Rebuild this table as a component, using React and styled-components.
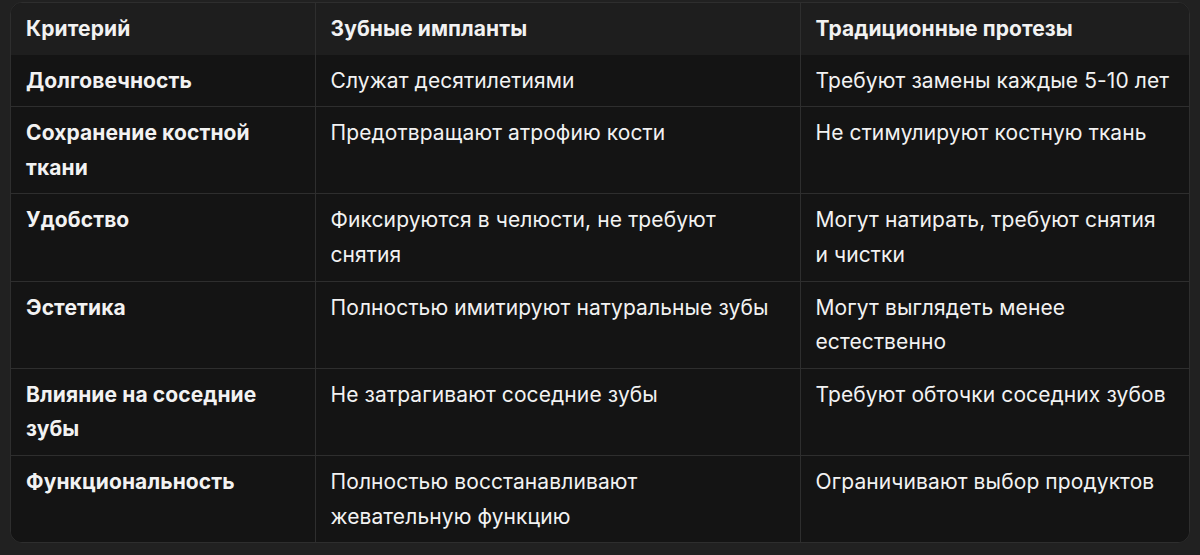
import React from "react";
import styled, { createGlobalStyle } from "styled-components";

const GlobalStyle = createGlobalStyle`
  html, body {
    margin: 0;
    padding: 0;
    background: #212121;
  }
  body {
    font-family: Inter, "Noto Sans", "Liberation Sans", sans-serif;
    -webkit-font-smoothing: antialiased;
  }
`;

/* ────── DATA ────── */
const HEAD = ["Критерий", "Зубные импланты", "Традиционные протезы"];

// short words are glued with a no-break space, as in the source layout
const ROWS = [
  ["Долговечность", "Служат десятилетиями", "Требуют замены каждые 5-10 лет"],
  ["Сохранение костной ткани", "Предотвращают атрофию кости", "Не стимулируют костную ткань"],
  ["Удобство", "Фиксируются в челюсти, не требуют снятия", "Могут натирать, требуют снятия и\u00A0чистки"],
  ["Эстетика", "Полностью имитируют натуральные зубы", "Могут выглядеть менее естественно"],
  ["Влияние на соседние зубы", "Не затрагивают соседние зубы", "Требуют обточки соседних зубов"],
  ["Функциональность", "Полностью восстанавливают жевательную\u00A0функцию", "Ограничивают выбор продуктов"],
];

/* ────── LAYOUT ────── */
const Page = styled.div`
  width: 1200px;
  height: 555px;
  padding: 2px 10px 0 10px;
  box-sizing: border-box;
`;

const Wrapper = styled.div`
  border: 1px solid #2e2e2e;
  border-radius: 12px;
  overflow: hidden;
  background: #141414;
`;

const Table = styled.table`
  width: 100%;
  border-collapse: collapse;
  table-layout: fixed;
`;

const HeadRow = styled.tr`
  background: #1e1e1e;
`;

const Row = styled.tr`
  background: #141414;
`;

const Cell = styled.td`
  padding: 9px 16px 8px 15px;
  vertical-align: top;
  text-align: left;
  color: #f2f2f2;
  font-size: 21px;
  letter-spacing: 0.1px;
  line-height: 34.6px;
  font-weight: ${(p) => (p.$bold ? 700 : 400)};
  border-right: 1px solid #2e2e2e;
  border-bottom: 1px solid #2e2e2e;

  &:last-child {
    border-right: none;
  }

  tr:last-child > & {
    border-bottom: none;
  }
`;

export default function App() {
  return (
    <Page>
      <GlobalStyle />
      <Wrapper>
        <Table>
          <colgroup>
            <col style={{ width: "304px" }} />
            <col style={{ width: "485px" }} />
            <col />
          </colgroup>
          <thead>
            <HeadRow>
              {HEAD.map((h) => (
                <Cell as="th" key={h} $bold>
                  {h}
                </Cell>
              ))}
            </HeadRow>
          </thead>
          <tbody>
            {ROWS.map((r) => (
              <Row key={r[0]}>
                <Cell $bold>{r[0]}</Cell>
                <Cell>{r[1]}</Cell>
                <Cell>{r[2]}</Cell>
              </Row>
            ))}
          </tbody>
        </Table>
      </Wrapper>
    </Page>
  );
}
